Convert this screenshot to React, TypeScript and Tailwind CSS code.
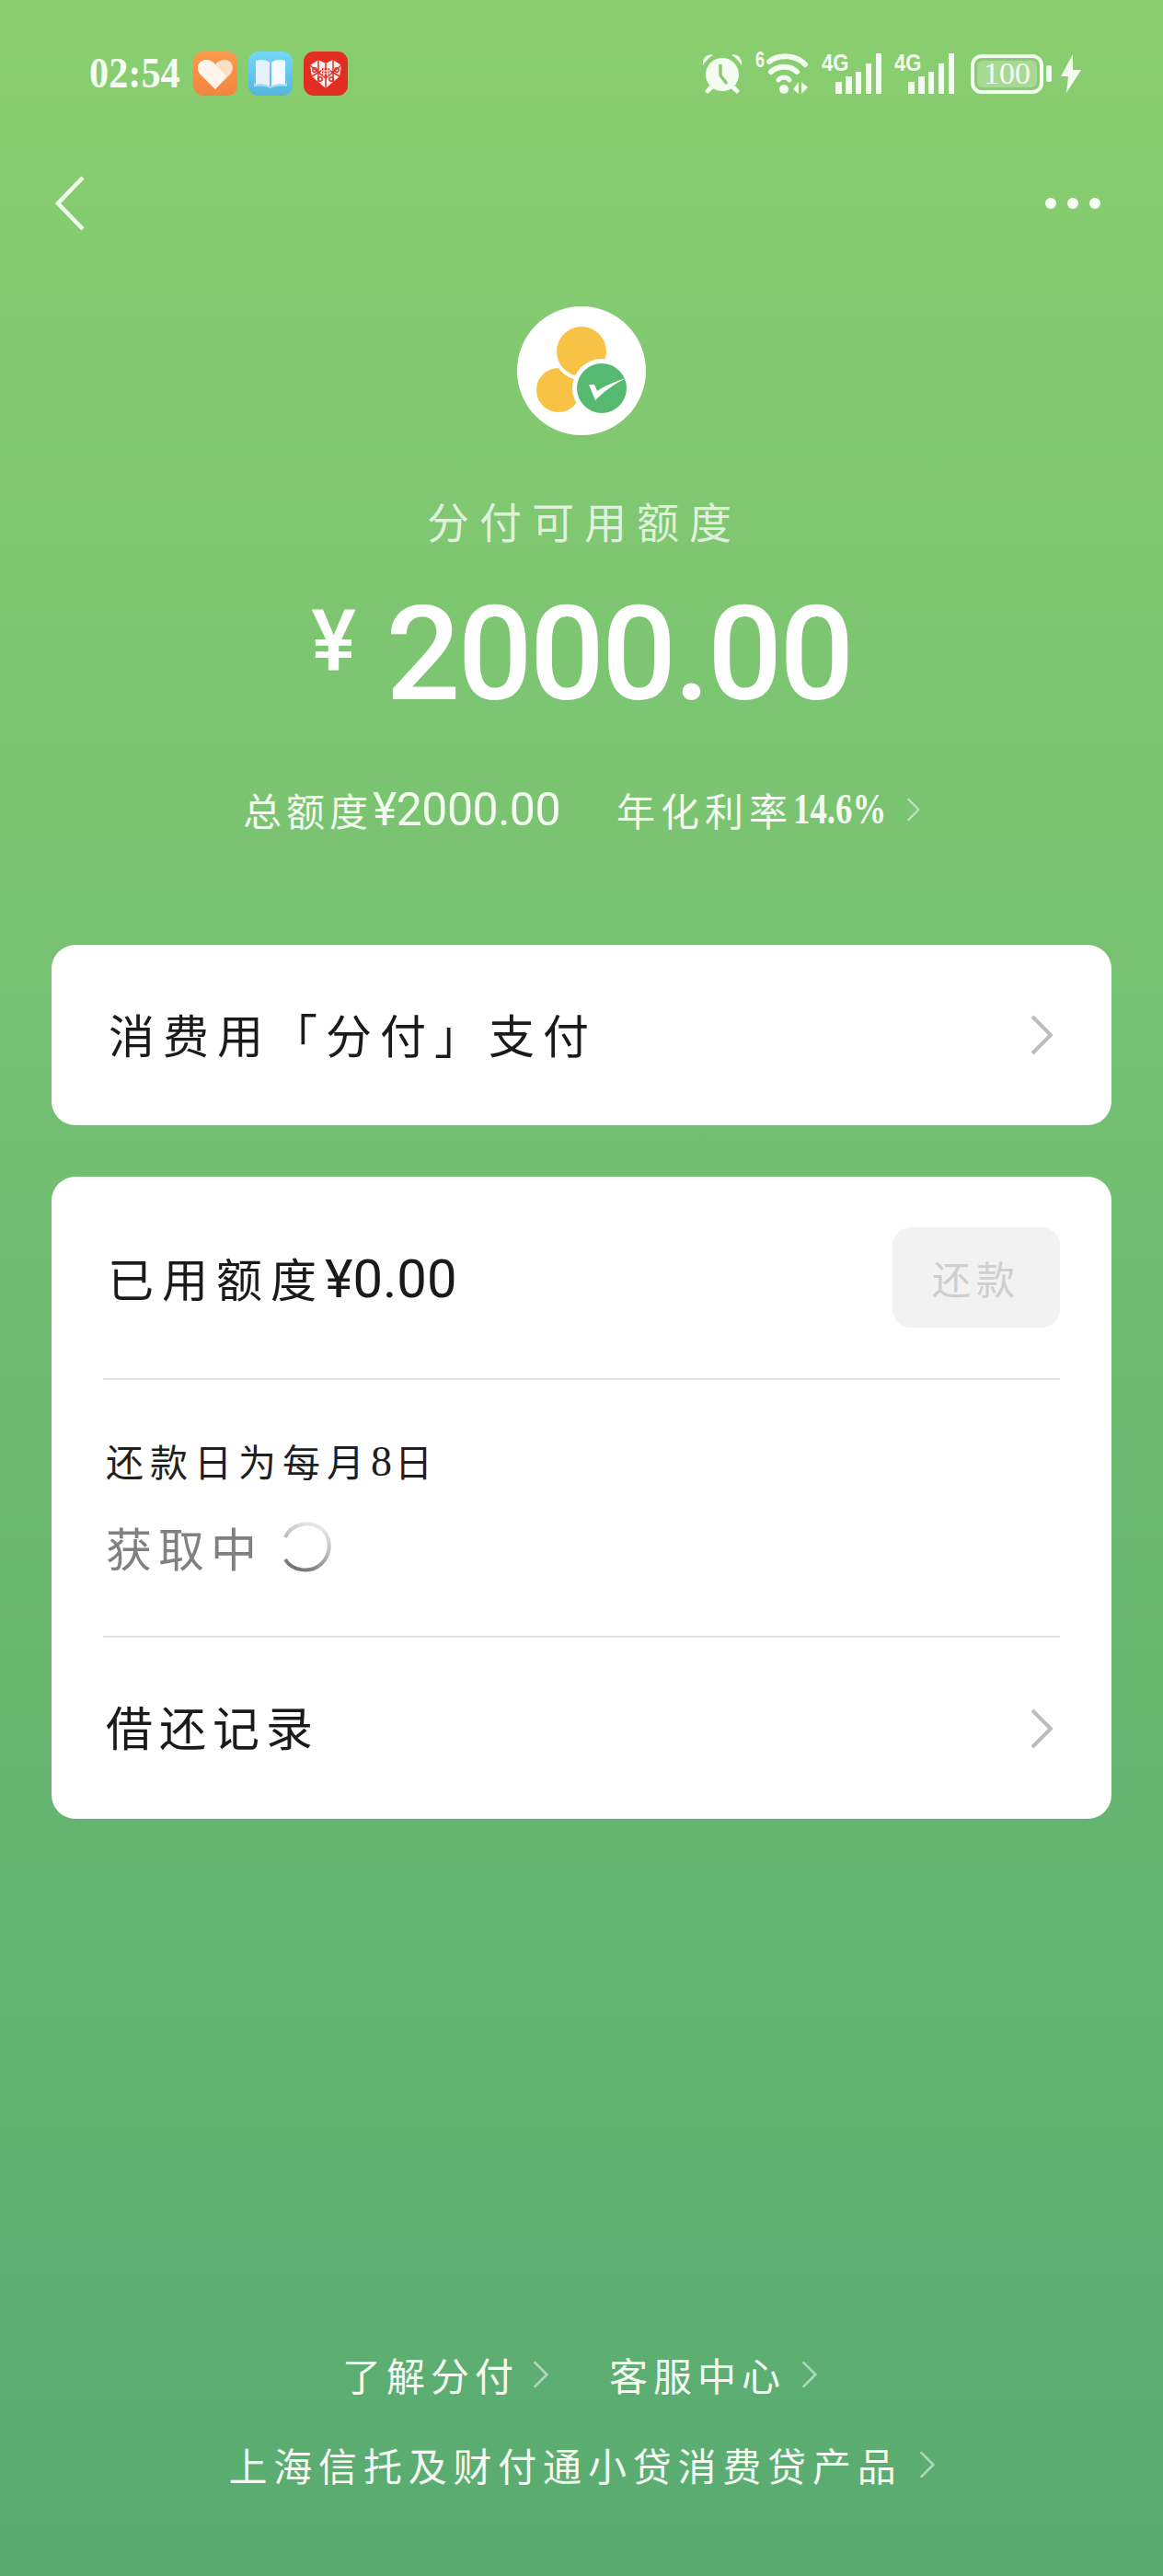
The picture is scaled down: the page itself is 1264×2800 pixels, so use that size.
import type { ReactNode } from 'react'

const cjk = 'font-["Noto_Sans_CJK_SC",sans-serif]'

function Chevron({ className }: { className: string }) {
    return (
        <svg viewBox="0 0 24 44" fill="none" stroke="currentColor" strokeWidth="4" className={className}>
            <path d="M2 2 L22 22 L2 42" />
        </svg>
    )
}

function HeartApp() {
    return (
        <svg viewBox="0 0 48 48" className="w-[48px] h-[48px]">
            <defs>
                <linearGradient id="orange" x1="0" y1="0" x2="0" y2="1">
                    <stop offset="0" stopColor="#fb9a4c" />
                    <stop offset="1" stopColor="#f2843f" />
                </linearGradient>
            </defs>
            <rect width="48" height="48" rx="11" fill="url(#orange)" />
            <path d="M24 41 L8 25 C2 18 6 9 14 9 C18 9 22 11 24 14 C26 11 30 9 34 9 C42 9 46 18 40 25 Z" fill="#fbdfc6" />
            <path d="M24 41 L8 25 C2 18 6 9 14 9 C18 9 20 11 23 13 L36 27 Z" fill="#fff5ec" />
        </svg>
    )
}

function BookApp() {
    return (
        <svg viewBox="0 0 48 48" className="w-[48px] h-[48px]">
            <defs>
                <linearGradient id="blue" x1="0" y1="0" x2="0" y2="1">
                    <stop offset="0" stopColor="#74d8fa" />
                    <stop offset="1" stopColor="#55b5dd" />
                </linearGradient>
            </defs>
            <rect width="48" height="48" rx="11" fill="url(#blue)" />
            <path d="M8 10 C14 8 20 9 23 12 L23 38 C19 35 13 35 8 36 Z" fill="#e6f2fb" />
            <path d="M40 10 C34 8 28 9 25 12 L25 38 C29 35 35 35 40 36 Z" fill="#f6fafe" />
            <path d="M6 33 L6 38 C12 37 19 37 24 40 C29 37 36 37 42 38 L42 33 L40 36 C35 35 29 35 25 38 L23 38 C19 35 13 35 8 36 Z" fill="#a9dcf3" />
        </svg>
    )
}

function PddApp() {
    return (
        <svg viewBox="0 0 48 48" className="w-[48px] h-[48px]">
            <rect width="48" height="48" rx="11" fill="#e22e22" />
            <path d="M24 40 L9 27 L7 15 L16 9 L24 13 L32 9 L41 15 L39 27 Z" fill="#fdf0ee" />
            <g stroke="#e22e22" strokeWidth="1.5" fill="none">
                <path d="M24 13 L24 40 M7 15 L24 29 L41 15 M9 27 L24 18 L39 27 M16 9 L16 33 M32 9 L32 33" />
                <circle cx="12" cy="20" r="2.2" />
                <circle cx="36" cy="20" r="2.2" />
                <circle cx="18" cy="30" r="2.2" />
                <circle cx="30" cy="30" r="2.2" />
            </g>
            <path d="M20 18 H28 V27 H20 Z" fill="#e22e22" />
            <path d="M22 18 V27 M26 18 V27 M19 21 H29 M19 24 H29" stroke="#fdf0ee" strokeWidth="1.2" />
        </svg>
    )
}

function AlarmIcon() {
    return (
        <svg viewBox="0 0 44 44" className="w-[44px] h-[44px]" fill="#f4fbf0">
            <circle cx="22" cy="23" r="18" />
            <path d="M1 13 C0 6 5 0 12 2 C8 4 4 8 1 13 Z M43 13 C44 6 39 0 32 2 C36 4 40 8 43 13 Z" />
            <path d="M8 35 L3 41 L6 44 L13 38 Z M36 35 L41 41 L38 44 L31 38 Z" />
            <path d="M20 12 V24 L27 33" stroke="#88cb6e" strokeWidth="3.4" fill="none" />
        </svg>
    )
}

function WifiIcon() {
    return (
        <div className="relative w-[60px] h-[48px] font-['Liberation_Sans',sans-serif] text-[#f4fbf0]">
            <span className="absolute left-0 top-[-6px] text-[24px] font-bold leading-[30px] scale-x-75 origin-left">6</span>
            <svg viewBox="0 0 60 48" className="absolute inset-0 w-[60px] h-[48px]" fill="none" stroke="#f4fbf0" strokeLinecap="round">
                <path d="M15 11 C25 3 44 3 54 14" strokeWidth="6" />
                <path d="M17 22 C25 15 38 15 45 22" strokeWidth="6" />
                <path d="M25 31 C28 27 34 27 37 31" strokeWidth="5" />
                <circle cx="31" cy="41" r="5" fill="#f4fbf0" stroke="none" />
                <path d="M47 46 V33 L41 41 Z M50 33 V46 L57 39 Z" fill="#f4fbf0" stroke="none" />
            </svg>
        </div>
    )
}

const bars = ['h-[13px]', 'h-[19px]', 'h-[24px]', 'h-[33px]', 'h-[44px]']

function SignalIcon() {
    return (
        <div className="relative w-[65px] h-[44px] font-['Liberation_Sans',sans-serif] text-[#f4fbf0]">
            <span className="absolute left-0 top-[-5px] text-[26px] font-bold leading-[30px] scale-x-[0.85] origin-left">4G</span>
            <div className="absolute inset-0 flex items-end justify-end gap-[4.3px]">
                {bars.map((h) => (
                    <div key={h} className={`w-[6.5px] ${h} bg-[#f4fbf0]`} />
                ))}
            </div>
        </div>
    )
}

function BatteryIcon() {
    return (
        <div className="flex items-center gap-[3px]">
            <div className="w-[79px] h-[43px] border-[4px] border-[#f4fbf0] rounded-[12px] p-[3px]">
                <div className="w-full h-full rounded-[6px] bg-white/25 flex items-center justify-center font-['Liberation_Serif',serif] text-[34px] leading-none text-[#f4fbf0]">
                    100
                </div>
            </div>
            <div className="w-[6px] h-[18px] rounded-[2px] bg-[#f4fbf0]" />
            <svg viewBox="0 0 22 42" className="ml-[7px] w-[22px] h-[42px]" fill="#f4fbf0">
                <path d="M13 0 L0 24 H8 L6 42 L22 17 H13 Z" />
            </svg>
        </div>
    )
}

function StatusBar() {
    return (
        <div className="h-[160px] pl-[97px] pr-[89px] flex items-center justify-between">
            <div className="flex items-center">
                <span className="w-[113px] mt-[-2px] font-['Liberation_Serif',serif] font-bold text-[47px] leading-none text-[#f6fcf2] scale-x-90 origin-left">02:54</span>
                <div className="flex gap-[12px]">
                    <HeartApp />
                    <BookApp />
                    <PddApp />
                </div>
            </div>
            <div className="flex items-center">
                <AlarmIcon />
                <div className="ml-[14px]"><WifiIcon /></div>
                <div className="ml-[12px]"><SignalIcon /></div>
                <div className="ml-[14px]"><SignalIcon /></div>
                <div className="ml-[18px]"><BatteryIcon /></div>
            </div>
        </div>
    )
}

function Logo() {
    return (
        <svg viewBox="0 0 140 140" className="w-[140px] h-[140px]">
            <circle cx="70" cy="70" r="70" fill="#fff" />
            <circle cx="45" cy="91" r="24" fill="#f8c345" />
            <circle cx="70" cy="49" r="31" fill="#fff" />
            <circle cx="70" cy="49" r="27" fill="#f8c345" />
            <circle cx="92" cy="89" r="32" fill="#fff" />
            <circle cx="92" cy="89" r="27" fill="#55ba6f" />
            <path d="M78 85 L85 102 C95 92 105 85 118 78 C106 82 96 86 87 92 L84 85 Z" fill="#fff" />
        </svg>
    )
}

function Spinner() {
    return (
        <svg viewBox="0 0 56 56" className="w-[56px] h-[56px]" fill="none">
            <defs>
                <linearGradient id="spin" x1="0.2" y1="1" x2="0.6" y2="0">
                    <stop offset="0" stopColor="#6f6f6f" />
                    <stop offset="0.55" stopColor="#b9b9b9" />
                    <stop offset="1" stopColor="#e6e6e6" />
                </linearGradient>
            </defs>
            <path d="M5 42 C12 54 32 58 44 47 C56 36 56 16 42 7 C30 0 12 3 5 18" stroke="url(#spin)" strokeWidth="4" />
        </svg>
    )
}

function Card({ children }: { children: ReactNode }) {
    return <div className="mx-[56px] bg-white rounded-[26px]">{children}</div>
}

export default function App() {
    return (
        <div className={`${cjk} w-[1264px] h-[2800px] flex flex-col bg-[linear-gradient(180deg,#8ace6f_0%,#76c172_38%,#64b470_72%,#5aab72_100%)]`}>
            <StatusBar />

            <div className="h-[122px] pl-[60px] pr-[68px] flex items-center justify-between">
                <svg viewBox="0 0 32 60" className="w-[32px] h-[60px]" fill="none" stroke="#f1fbec" strokeWidth="4.5">
                    <path d="M30 2 L3 30 L30 58" />
                </svg>
                <div className="flex gap-[12px]">
                    <div className="w-[12px] h-[12px] rounded-full bg-[#f7fcf4]" />
                    <div className="w-[12px] h-[12px] rounded-full bg-[#f7fcf4]" />
                    <div className="w-[12px] h-[12px] rounded-full bg-[#f7fcf4]" />
                </div>
            </div>

            <div className="mt-[51px] flex justify-center">
                <Logo />
            </div>

            <div className="mt-[62px] pl-[6px] text-center text-[46px] leading-[60px] tracking-[11px] text-white/75">
                分付可用额度
            </div>

            <div className="mt-[41px] h-[150px] flex items-center justify-center font-['Roboto',sans-serif] font-medium text-white">
                <span className="text-[92px] leading-none mr-[32px] mt-[-26px]">¥</span>
                <span className="text-[143px] leading-[150px] tracking-[-3px]">2000.00</span>
            </div>

            <div className="mt-[64px] h-[60px] flex items-center justify-center text-[#f3faef] text-[42px] leading-[60px]">
                <span className="tracking-[5px]">总额度</span>
                <span className="font-['Roboto',sans-serif] text-[50px] tracking-[-0.5px]">¥2000.00</span>
                <span className="ml-[61px] tracking-[6px]">年化利率</span>
                <span className="w-[102px] font-['Liberation_Serif',serif] font-bold text-[46px] scale-x-[0.8] origin-left">14.6%</span>
                <Chevron className="ml-[21px] w-[15px] h-[26px] text-white/50" />
            </div>

            <div className="mt-[117px]">
                <Card>
                    <div className="h-[196px] pl-[62px] pr-[64px] flex items-center justify-between">
                        <span className="mb-[5px] text-[50px] leading-[60px] tracking-[9px] text-[#1a1a1a]">消费用「分付」支付</span>
                        <Chevron className="w-[24px] h-[44px] text-[#bcbcbc]" />
                    </div>
                </Card>
            </div>

            <div className="mt-[56px]">
                <Card>
                    <div className="mx-[56px]">
                        <div className="h-[219px] flex items-center justify-between pl-[5px]">
                            <span className="text-[50px] leading-[60px] text-[#1a1a1a]">
                                <span className="tracking-[9px]">已用额度</span>
                                <span className="font-['Roboto',sans-serif] text-[58px]">¥0.00</span>
                            </span>
                            <div className="w-[182px] h-[109px] rounded-[20px] bg-[#f2f2f2] flex items-center justify-center text-[42px] tracking-[6px] text-[#cfcfcf]">
                                还款
                            </div>
                        </div>
                        <div className="h-[2px] bg-[#e5e5e5]" />
                        <div className="h-[278px] pl-[3px] pt-[58px]">
                            <div className="h-[60px] flex items-center text-[41px] tracking-[7px] text-[#1f1f1f]">
                                还款日为每月<span className="font-['Liberation_Serif',serif] text-[46px] tracking-[3px]">8</span>日
                            </div>
                            <div className="mt-[33px] h-[60px] flex items-center text-[50px] tracking-[7px] text-[#808080]">
                                获取中
                                <div className="ml-[19px]"><Spinner /></div>
                            </div>
                        </div>
                        <div className="h-[2px] bg-[#e5e5e5]" />
                        <div className="h-[197px] pl-[3px] pr-[8px] flex items-center justify-between">
                            <span className="mb-[5px] text-[51px] leading-[60px] tracking-[7px] text-[#1a1a1a]">借还记录</span>
                            <Chevron className="w-[24px] h-[44px] text-[#bcbcbc]" />
                        </div>
                    </div>
                </Card>
            </div>

            <div className="mt-auto pb-[72px] text-[42px] leading-[98px] text-[#f4faf1]">
                <div className="flex items-center justify-center pr-[4px]">
                    <span className="tracking-[6px]">了解分付</span>
                    <Chevron className="ml-[15px] w-[17px] h-[30px] text-white/50" />
                    <span className="ml-[66px] tracking-[6px]">客服中心</span>
                    <Chevron className="ml-[17px] w-[17px] h-[30px] text-white/50" />
                </div>
                <div className="flex items-center justify-center">
                    <span className="tracking-[6.8px]">上海信托及财付通小贷消费贷产品</span>
                    <Chevron className="ml-[18px] w-[17px] h-[30px] text-white/50" />
                </div>
            </div>
        </div>
    )
}
